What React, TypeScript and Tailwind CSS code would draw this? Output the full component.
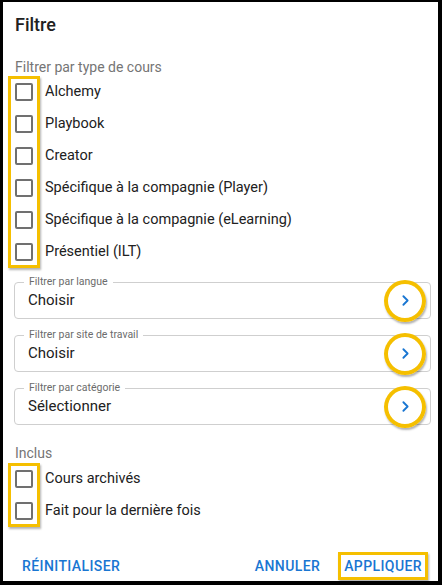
import { ChevronRight } from 'lucide-react';

const typeOptions = [
  'Alchemy',
  'Playbook',
  'Creator',
  'Spécifique à la compagnie (Player)',
  'Spécifique à la compagnie (eLearning)',
  'Présentiel (ILT)',
];

const includeOptions = ['Cours archivés', 'Fait pour la dernière fois'];

const selects = [
  { label: 'Filtrer par langue', value: 'Choisir' },
  { label: 'Filtrer par site de travail', value: 'Choisir' },
  { label: 'Filtrer par catégorie', value: 'Sélectionner' },
];

// annotation highlight (yellow frame + soft shadow)
const highlight = 'shadow-[inset_0_0_0_3px_#f5bf00,1px_2px_2px_rgba(0,0,0,0.3)]';
const ring = 'shadow-[inset_0_0_0_4px_#f5bf00,1px_2px_2px_rgba(0,0,0,0.3)]';

const Box = () => (
  <span className="block w-[18px] h-[18px] rounded-[2px] border-2 border-[#707070] bg-white" />
);

const CheckGroup = ({ items }: { items: string[] }) => (
  <div className="flex">
    <div className={`ml-[5px] w-[32px] flex flex-col ${highlight}`}>
      {items.map((item) => (
        <div key={item} className="h-[32px] flex items-center justify-center">
          <Box />
        </div>
      ))}
    </div>
    <div className="ml-[5px] flex flex-col">
      {items.map((item) => (
        <div key={item} className="h-[32px] flex items-center text-[14.5px] text-[#212121]">
          {item}
        </div>
      ))}
    </div>
  </div>
);

const SelectField = ({ label, value }: { label: string; value: string }) => (
  <div className="relative ml-[11px] w-[417px] h-[37px] rounded-[4px] border border-[#cfcfcf] flex items-center justify-between pl-[13px] pr-[4px]">
    <span className="absolute left-[9px] top-[-8px] px-[5px] bg-white text-[10.5px] leading-[14px] text-[#6b6b6b]">
      {label}
    </span>
    <span className="text-[15px] text-[#212121]">{value}</span>
    <span className={`shrink-0 w-[42px] h-[42px] rounded-full flex items-center justify-center ${ring}`}>
      <ChevronRight size={17} strokeWidth={2.6} className="text-[#1976d2]" />
    </span>
  </div>
);

export default function App() {
  return (
    <div
      className="w-[442px] h-[585px] bg-white border-l-[3px] border-r-[4px] border-t-[2px] border-b-[4px] border-black flex flex-col"
      style={{ fontFamily: 'Roboto, "Noto Sans", sans-serif' }}
    >
      <h1 className="mt-[11px] ml-[12px] h-[24px] leading-[24px] text-[18px] font-medium text-[#212121]">Filtre</h1>

      <div className="mt-[22px] ml-[12px] leading-[16px] text-[14px] text-[#757575]">Filtrer par type de cours</div>
      <div className="mt-[1px]">
        <CheckGroup items={typeOptions} />
      </div>

      <div className="mt-[14px] flex flex-col gap-[16px]">
        {selects.map((s) => (
          <SelectField key={s.label} label={s.label} value={s.value} />
        ))}
      </div>

      <div className="mt-[20px] ml-[12px] leading-[16px] text-[14px] text-[#757575]">Inclus</div>
      <div className="mt-[2px]">
        <CheckGroup items={includeOptions} />
      </div>

      <div className="mt-[25px] flex items-center text-[14px] font-medium tracking-[0.4px] text-[#1976d2]">
        <button className="ml-[19px] h-[28px]">RÉINITIALISER</button>
        <button className="ml-auto h-[28px]">ANNULER</button>
        <button className={`ml-[18px] mr-[10px] h-[28px] px-[6px] ${highlight}`}>APPLIQUER</button>
      </div>
    </div>
  );
}
